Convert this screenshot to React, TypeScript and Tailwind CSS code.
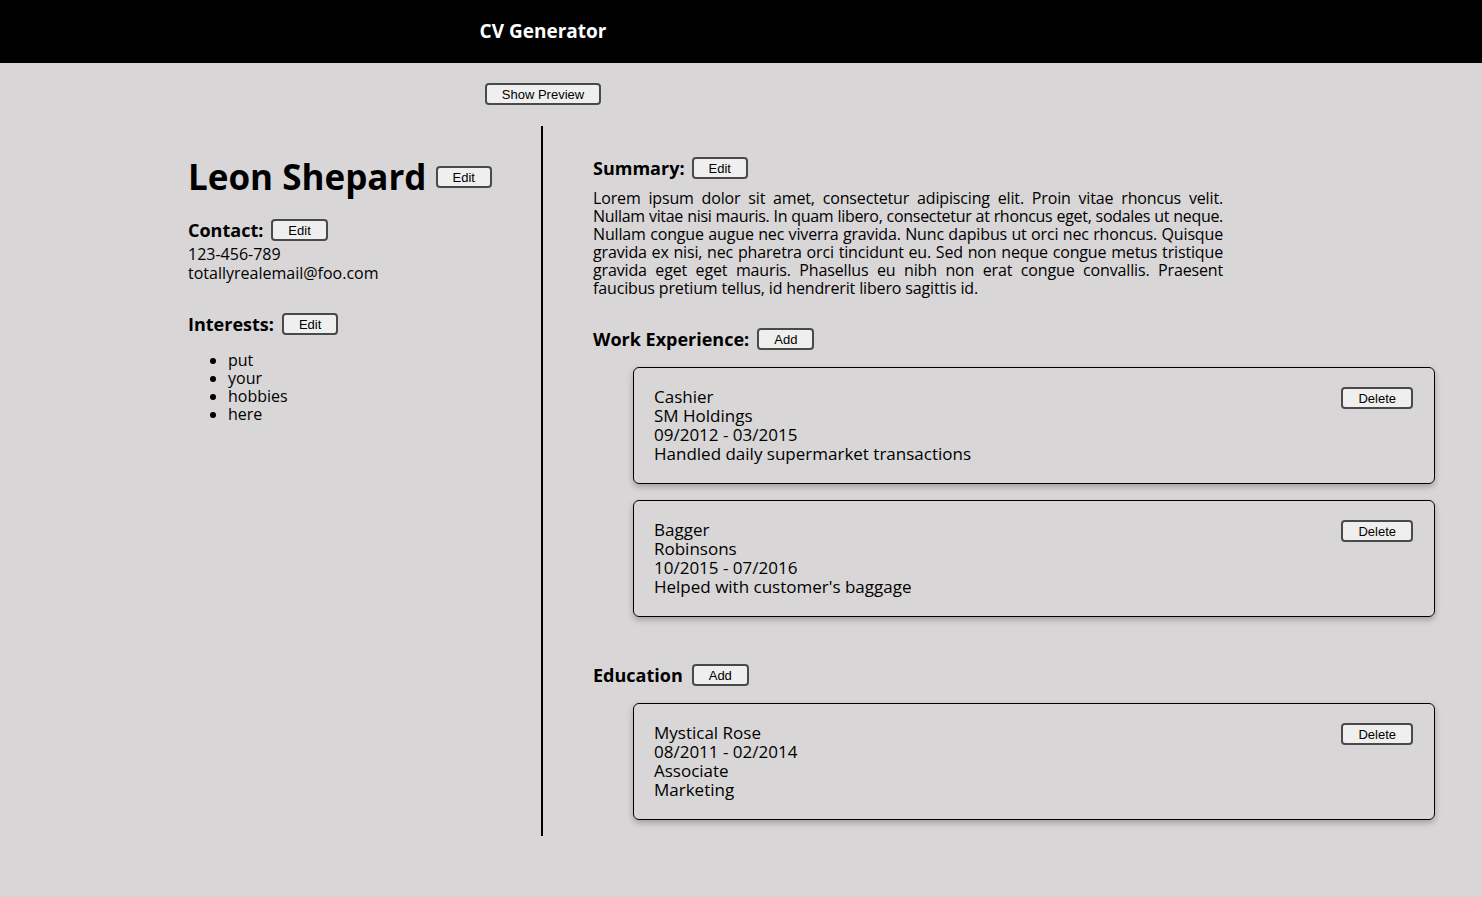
const FONT = { fontFamily: '"Open Sans", "Noto Sans", sans-serif' };

function Btn({ children, className = "" }: { children: React.ReactNode; className?: string }) {
  return (
    <button
      className={
        "block h-[22px] px-[15px] bg-[#efefef] border-2 border-[#4a4a4a] rounded-[4px] text-[13px] leading-none text-black shrink-0 " +
        className
      }
      style={{ fontFamily: '"Liberation Sans", Arial, sans-serif' }}
    >
      {children}
    </button>
  );
}

function Card({ lines }: { lines: string[] }) {
  return (
    <div className="ml-[40px] flex items-start justify-between border border-black rounded-[6px] pt-[19px] pb-[20px] pl-[20px] pr-[20px] shadow-[0_3px_6px_rgba(0,0,0,0.25)]">
      <div className="text-[17px] leading-[19px]">
        {lines.map((l) => (
          <div key={l}>{l}</div>
        ))}
      </div>
      <Btn className="mr-[1px]">Delete</Btn>
    </div>
  );
}

const summary = [
  { t: "Lorem ipsum dolor sit amet, consectetur adipiscing elit. Proin vitae rhoncus velit.", c: "" },
  { t: "Nullam vitae nisi mauris. In quam libero, consectetur at rhoncus eget, sodales ut neque.", c: "tracking-[-0.3px]" },
  { t: "Nullam congue augue nec viverra gravida. Nunc dapibus ut orci nec rhoncus. Quisque", c: "" },
  { t: "gravida ex nisi, nec pharetra orci tincidunt eu. Sed non neque congue metus tristique", c: "" },
  { t: "gravida eget eget mauris. Phasellus eu nibh non erat congue convallis. Praesent", c: "" },
];

export default function App() {
  return (
    <div className="min-h-[897px] bg-[#d8d6d7] text-black" style={FONT}>
      <header className="h-[63px] bg-black flex items-center">
        <div className="w-[1086px] text-center text-white font-bold text-[19px] leading-none">CV Generator</div>
      </header>
      <div className="w-[1086px] flex justify-center pt-[20px]">
        <Btn>Show Preview</Btn>
      </div>
      <div className="flex mt-[21px]">
        <div className="w-[541px] shrink-0 pl-[188px] pt-[31px]">
          <div className="flex items-center gap-[9px] h-[40px]">
            <h1 className="text-[35px] font-bold leading-[40px]">Leon Shepard</h1>
            <Btn>Edit</Btn>
          </div>
          <div className="flex items-center gap-[8px] h-[22px] mt-[22px]">
            <h2 className="text-[18px] font-bold leading-none">Contact:</h2>
            <Btn>Edit</Btn>
          </div>
          <div className="mt-[4px] text-[16px] leading-[19px]">
            <div>123-456-789</div>
            <div>totallyrealemail@foo.com</div>
          </div>
          <div className="flex items-center gap-[8px] h-[22px] mt-[30px]">
            <h2 className="text-[18px] font-bold leading-none">Interests:</h2>
            <Btn>Edit</Btn>
          </div>
          <ul className="mt-[16px] list-disc pl-[40px] text-[16px] leading-[18px]">
            <li>put</li>
            <li>your</li>
            <li>hobbies</li>
            <li>here</li>
          </ul>
        </div>
        <div className="w-[2px] bg-black shrink-0" />
        <div className="flex-1 pl-[50px] pr-[47px] pt-[31px] pb-[16px]">
          <div className="flex items-center gap-[7px] h-[22px]">
            <h2 className="text-[18px] font-bold leading-none">Summary:</h2>
            <Btn>Edit</Btn>
          </div>
          <div className="mt-[10px] w-[630px] text-[16px] leading-[18px] tracking-[-0.15px]">
            {summary.map((l) => (
              <div key={l.t} className={"text-justify [text-align-last:justify] whitespace-nowrap " + l.c}>
                {l.t}
              </div>
            ))}
            <div>faucibus pretium tellus, id hendrerit libero sagittis id.</div>
          </div>
          <div className="flex items-center gap-[8px] h-[22px] mt-[31px]">
            <h2 className="text-[18px] font-bold leading-none">Work Experience:</h2>
            <Btn>Add</Btn>
          </div>
          <div className="mt-[17px]">
            <Card lines={["Cashier", "SM Holdings", "09/2012 - 03/2015", "Handled daily supermarket transactions"]} />
          </div>
          <div className="mt-[16px]">
            <Card lines={["Bagger", "Robinsons", "10/2015 - 07/2016", "Helped with customer's baggage"]} />
          </div>
          <div className="flex items-center gap-[9px] h-[22px] mt-[47px]">
            <h2 className="text-[18px] font-bold leading-none">Education</h2>
            <Btn>Add</Btn>
          </div>
          <div className="mt-[17px]">
            <Card lines={["Mystical Rose", "08/2011 - 02/2014", "Associate", "Marketing"]} />
          </div>
        </div>
      </div>
    </div>
  );
}
